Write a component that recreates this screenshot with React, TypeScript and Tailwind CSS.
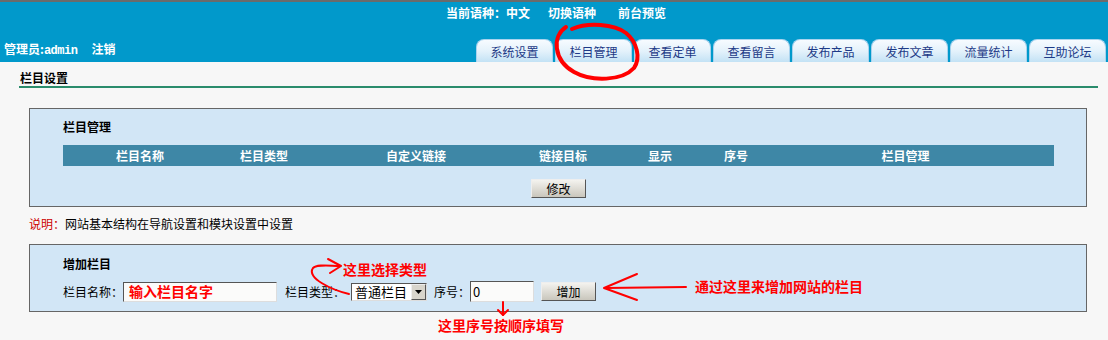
import React from 'react';

const tabs = ['系统设置', '栏目管理', '查看定单', '查看留言', '发布产品', '发布文章', '流量统计', '互助论坛'];

// header cells of the column table, widths tuned to the screenshot
const columns = [
  { label: '栏目名称', w: 'w-[154px]' },
  { label: '栏目类型', w: 'w-[94px]' },
  { label: '自定义链接', w: 'w-[210px]' },
  { label: '链接目标', w: 'w-[84px]' },
  { label: '显示', w: 'w-[110px]' },
  { label: '序号', w: 'w-[42px]' },
  { label: '栏目管理', w: 'flex-1' },
];

const OldButton = ({ label }: { label: string }) => (
  <button className="w-[55px] h-[19px] border border-t-[#eee] border-l-[#eee] border-r-[#555] border-b-[#555] bg-gradient-to-b from-[#f4f3ef] to-[#c9c6bc] text-[12px] leading-none text-black">
    {label}
  </button>
);

const inset = 'border border-t-[#555] border-l-[#555] border-r-[#ddd] border-b-[#ddd]';

const App = () => {
  return (
    <div className="relative w-[1108px] h-[340px] overflow-hidden bg-[#f7f7f7] text-[12px] text-black font-['SimSun','Noto_Sans_CJK_SC',sans-serif]">
      {/* top bar */}
      <header className="h-[62px] bg-[#0199cb] border-t-2 border-[#6b6b6b] flex flex-col">
        <div className="h-[20px] flex items-center justify-center gap-[18px] pt-[2px] pl-[4px] text-white font-bold">
          <span>当前语种：中文</span>
          <span>切换语种</span>
          <span className="pl-[4px]">前台预览</span>
        </div>
        <div className="flex-1 flex items-end justify-between pr-[2px]">
          <div className="pb-[2px] pl-[4px] text-white font-bold">
            管理员:<span className="font-['Liberation_Mono',monospace] tracking-[-0.5px]">admin</span>
            <span className="ml-[14px]">注销</span>
          </div>
          <nav className="flex gap-[2px]">
            {tabs.map((t) => (
              <div
                key={t}
                className="w-[77px] h-[23px] rounded-t-[8px] border border-b-0 border-[#a9d3ee] bg-gradient-to-b from-[#f7fbff] via-[#e4f2fb] to-[#c3e2f5] flex items-center justify-center pt-[1px] text-[#1d3a87]"
              >
                {t}
              </div>
            ))}
          </nav>
        </div>
      </header>

      {/* page title */}
      <div className="pl-[19px] pr-[10px] pt-[10px]">
        <div className="font-bold leading-none pb-[2px] pl-[1px]">栏目设置</div>
        <div className="h-[2px] bg-[#2a8c6c]" />
      </div>

      <div className="pl-[29px] pr-[21px] pt-[20px]">
        {/* column list box */}
        <section className="h-[99px] border border-[#666] bg-[#d2e6f6] pl-[33px] pr-[32px] pt-[12px]">
          <div className="font-bold leading-none">栏目管理</div>
          <div className="mt-[12px] h-[21px] bg-[#3e87a6] flex items-center text-white font-bold">
            {columns.map((c) => (
              <div key={c.label} className={`${c.w} text-center shrink-0`}>
                {c.label}
              </div>
            ))}
          </div>
          <div className="flex justify-center mt-[13px]">
            <OldButton label="修改" />
          </div>
        </section>

        <p className="mt-[11px] leading-none">
          <span className="text-[#c00]">说明：</span>网站基本结构在导航设置和模块设置中设置
        </p>

        {/* add column box */}
        <section className="mt-[14px] h-[68px] border border-[#666] bg-[#d2e6f6] pl-[33px] pt-[13px]">
          <div className="font-bold leading-none">增加栏目</div>
          <div className="mt-[11px] flex items-center">
            <span>栏目名称：</span>
            <div className={`w-[154px] h-[20px] ${inset} bg-[#fbfbfa] pl-[5px] flex items-center text-[#f00] font-bold text-[14px]`}>
              输入栏目名字
            </div>
            <span className="ml-[8px]">栏目类型：</span>
            <div className={`ml-[6px] w-[76px] h-[18px] ${inset} bg-white flex items-center`}>
              <span className="flex-1 pl-[3px] text-[13px] leading-none">普通栏目</span>
              <div className="w-[15px] h-[16px] border border-t-[#eee] border-l-[#eee] border-r-[#555] border-b-[#555] bg-[#d8d5cc] flex items-center justify-center">
                <svg width="7" height="4" viewBox="0 0 7 4">
                  <path d="M0 0 L7 0 L3.5 4 Z" fill="#000" />
                </svg>
              </div>
            </div>
            <span className="ml-[7px]">序号：</span>
            <div className={`w-[64px] h-[21px] ${inset} bg-[#fbfbfa] pl-[2px] flex items-center text-[13px]`}>
              0
            </div>
            <div className="ml-[7px]">
              <OldButton label="增加" />
            </div>
          </div>
        </section>
      </div>

      {/* hand-drawn notes over the screenshot */}
      <span className="absolute left-[343px] top-[262px] text-[#f00] font-bold text-[14px] leading-none">这里选择类型</span>
      <span className="absolute left-[695px] top-[279px] text-[#f00] font-bold text-[14px] leading-none">通过这里来增加网站的栏目</span>
      <span className="absolute left-[438px] top-[318px] text-[#f00] font-bold text-[14px] leading-none">这里序号按顺序填写</span>
      <svg className="absolute left-0 top-0 pointer-events-none" width="1108" height="340" viewBox="0 0 1108 340">
        <g fill="none" stroke="#f00" strokeLinecap="round" strokeLinejoin="round">
          <path
            d="M566 27 C 552 36, 553 60, 574 72 C 592 82, 622 81, 634 68 C 641 58, 637 42, 626 33 C 614 24, 588 22, 572 29"
            strokeWidth="4"
          />
          <path d="M349 294 C 332 290, 306 278, 313 268 C 317 264, 330 266, 340 266" strokeWidth="2" />
          <path d="M328 259 L 341 266 L 330 273" strokeWidth="2" />
          <path d="M686 287 L 606 288" strokeWidth="2" />
          <path d="M637 274 L 604 288 L 637 300" strokeWidth="2" />
          <path d="M503 302 L 503 315" strokeWidth="2" />
          <path d="M498 310 L 503 315 L 508 310" strokeWidth="2" />
        </g>
      </svg>
    </div>
  );
};

export default App;
